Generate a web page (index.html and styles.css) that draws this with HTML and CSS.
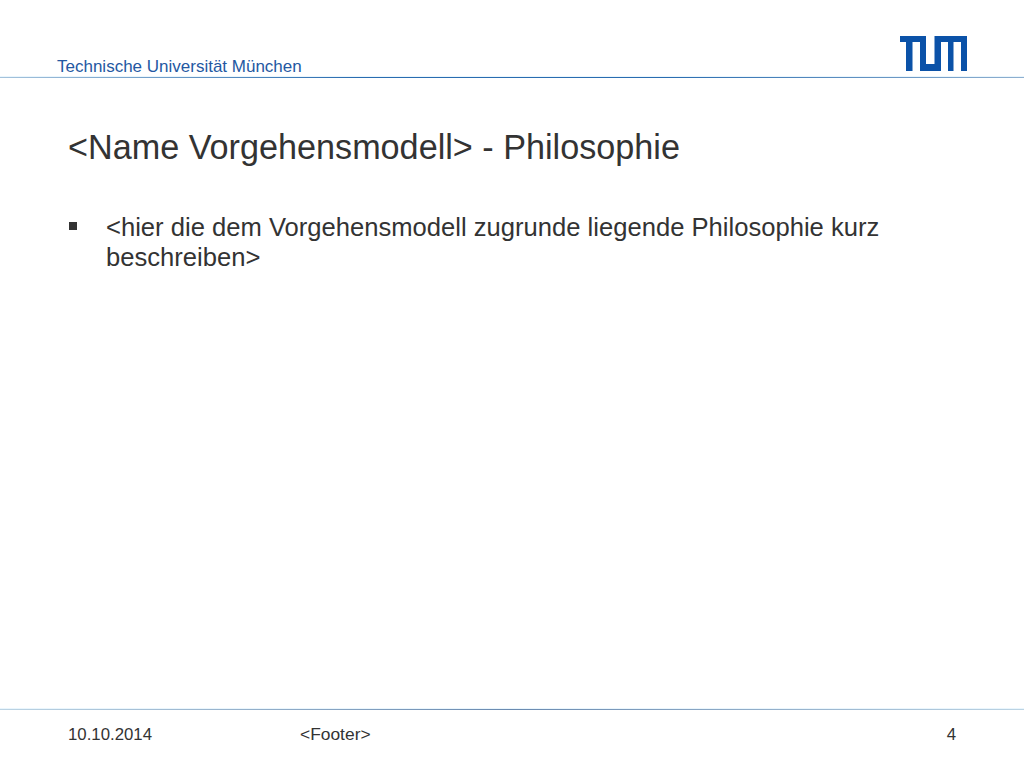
FILE: index.html
```html
<!DOCTYPE html>
<html lang="de">
<head>
<meta charset="utf-8">
<title>Philosophie</title>
<link rel="stylesheet" href="styles.css">
</head>
<body>
<div class="slide">
  <header class="top">
    <span class="uni">Technische Universität München</span>
    <svg class="logo" width="67" height="35" viewBox="0 0 67 35" aria-label="TUM">
      <path fill="#0b52a8" d="M0 0H26V28H34.5V0H67V35H61V6H53.5V35H48V6H41V35H20V6H12.5V35H6V6H0Z"/>
    </svg>
  </header>
  <div class="rule rule-top"></div>
  <main class="body">
    <h1 class="title">&lt;Name Vorgehensmodell&gt; - Philosophie</h1>
    <div class="item">
      <span class="bullet"></span>
      <p class="text">&lt;hier die dem Vorgehensmodell zugrunde liegende Philosophie kurz beschreiben&gt;</p>
    </div>
  </main>
  <div class="rule rule-bottom"></div>
  <footer class="bottom">
    <span class="date">10.10.2014</span>
    <span class="foot">&lt;Footer&gt;</span>
    <span class="num">4</span>
  </footer>
</div>
</body>
</html>
```
FILE: styles.css
```css
html, body { margin: 0; padding: 0; background: #fff; }
.slide {
  width: 1024px; height: 768px; display: flex; flex-direction: column;
  font-family: "Liberation Sans", Arial, sans-serif; color: #333; overflow: hidden;
}
.top {
  height: 77px; box-sizing: border-box; flex: none; display: flex; justify-content: space-between;
  align-items: flex-start; padding: 36px 57px 0 57px;
}
.uni { font-size: 17px; line-height: 18px; margin-top: 22px; color: #2458a2; }
.logo { display: block; }
.rule { height: 1px; flex: none; box-shadow: 0 -1px 0 #eaf6fd; }
.rule-top { background: linear-gradient(90deg, #a5c3dc 0%, #2a6cb0 35%, #2a6cb0 65%, #8fb0d0 100%); }
.rule-bottom { background: linear-gradient(90deg, #bcd4e4 0%, #6a8ab0 50%, #bcd4e4 100%); }
.body { flex: 1; padding: 49px 60px 0 68px; }
.title { margin: 0; font-size: 34.2px; font-weight: normal; line-height: 40px; color: #333; }
.item { display: flex; margin-top: 45px; }
.bullet { width: 8px; height: 8px; background: #333; flex: none; margin: 10px 29px 0 1px; }
.text { margin: 0; font-size: 25.6px; line-height: 30px; width: 790px; }
.bottom {
  height: 58px; box-sizing: border-box; flex: none; display: flex; align-items: baseline; padding: 15px 68px 0 68px;
  font-size: 16.8px; line-height: 18px;
}
.date { width: 232px; }
.foot { flex: 1; font-size: 17.4px; }
```
